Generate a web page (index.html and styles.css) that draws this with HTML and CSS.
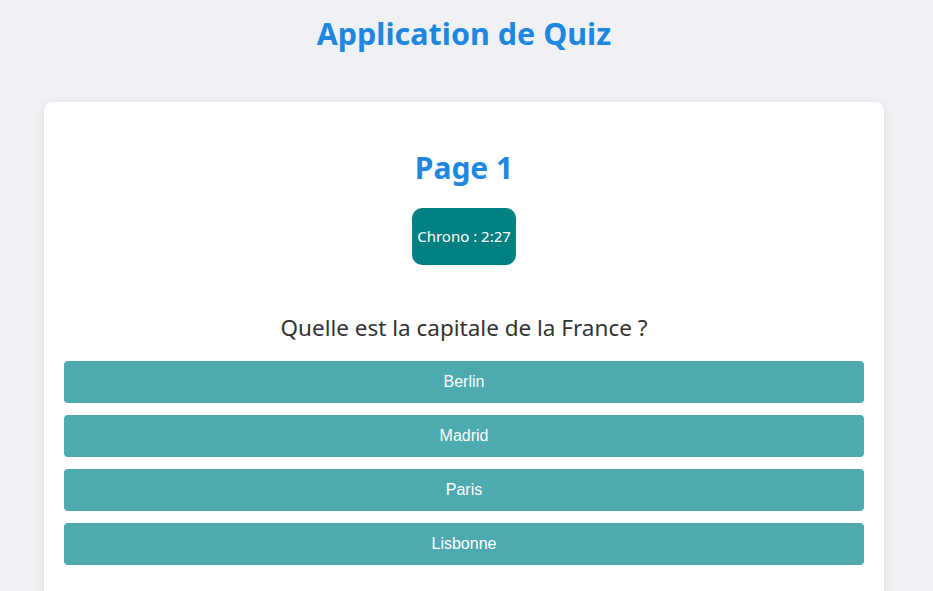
FILE: index.html
```html
<!DOCTYPE html>
<html lang="fr">
<head>
<meta charset="utf-8">
<title>Application de Quiz</title>
<link rel="stylesheet" href="styles.css">
</head>
<body>
<div class="app">
  <h1 class="app-title">Application de Quiz</h1>
  <main class="card">
    <h2 class="page-title">Page 1</h2>
    <div class="chrono">Chrono : 2:27</div>
    <p class="question">Quelle est la capitale de la France ?</p>
    <div class="answers">
      <button class="answer">Berlin</button>
      <button class="answer">Madrid</button>
      <button class="answer">Paris</button>
      <button class="answer">Lisbonne</button>
    </div>
  </main>
</div>
</body>
</html>
```

FILE: styles.css
```css
html, body {
  margin: 0;
  padding: 0;
}
body {
  background: #f0f1f5;
  font-family: "Noto Sans", "Open Sans", sans-serif;
  overflow: hidden;
}
.app {
  width: 928px;
  display: flex;
  flex-direction: column;
  align-items: center;
}
.app-title {
  margin: 12px 0 0;
  font-size: 30.5px;
  line-height: 42px;
  font-weight: 700;
  color: #1e88e0;
}
.card {
  margin-top: 48px;
  width: 800px;
  padding: 40px 20px 40px;
  background: #fff;
  border-radius: 8px;
  box-shadow: 0 2px 8px rgba(0, 0, 0, 0.1);
  display: flex;
  flex-direction: column;
  align-items: center;
}
.page-title {
  margin: 0;
  font-size: 30px;
  line-height: 52px;
  font-weight: 700;
  color: #1e88e0;
}
.chrono {
  margin-top: 14px;
  background: #008080;
  color: #fff;
  border-radius: 10px;
  padding: 20px 5px;
  font-size: 15px;
  line-height: 17px;
}
.question {
  margin: 48px 0 0;
  font-size: 22.5px;
  line-height: 30px;
  color: #333;
}
.answers {
  margin-top: 18px;
  width: 100%;
  display: flex;
  flex-direction: column;
  gap: 12px;
}
.answer {
  height: 42px;
  border: none;
  border-radius: 4px;
  background: #4daaaf;
  color: #fff;
  font-family: "Liberation Sans", Arial, sans-serif;
  font-size: 16px;
  padding: 0;
}
```
